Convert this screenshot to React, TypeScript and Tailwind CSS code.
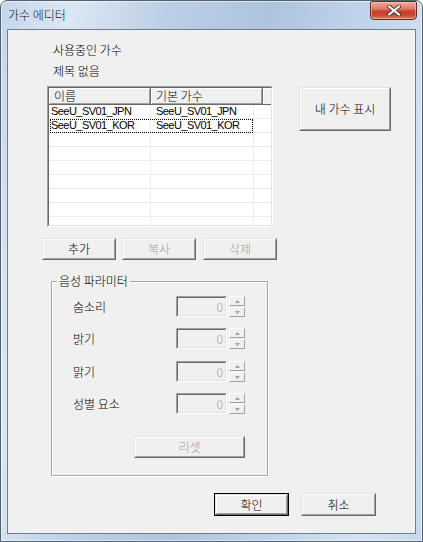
import React from "react";

type BtnProps = {
  children: React.ReactNode;
  disabled?: boolean;
  isDefault?: boolean;
  className?: string;
};

function Btn({ children, disabled = false, isDefault = false, className = "" }: BtnProps) {
  const face = (
    <div className="flex h-full w-full border border-t-[#e3e3e3] border-l-[#e3e3e3] border-b-[#696969] border-r-[#696969]">
      <div className="flex h-full w-full items-center justify-center border border-t-white border-l-white border-b-[#a0a0a0] border-r-[#a0a0a0] bg-[#f0f0f0]">
        <span className={disabled ? "text-[12px] leading-[16px] text-[#a0a0a0]" : "text-[12px] leading-[16px] text-black"}>
          {children}
        </span>
      </div>
    </div>
  );
  if (isDefault) {
    return <div className={"border border-black " + className}>{face}</div>;
  }
  return <div className={className}>{face}</div>;
}

function Arrow({ up }: { up: boolean }) {
  return (
    <svg width="5" height="3" viewBox="0 0 5 3">
      {up ? <path d="M0 3 L2.5 0 L5 3 Z" fill="#a0a0a0" /> : <path d="M0 0 L2.5 3 L5 0 Z" fill="#a0a0a0" />}
    </svg>
  );
}

function SpinRow({ label, className = "" }: { label: string; className?: string }) {
  return (
    <div className={"flex items-center " + className}>
      <div className="w-[103px] text-[12px] leading-[16px]">{label}</div>
      <div className="h-[21px] w-[51px] border border-t-[#a0a0a0] border-l-[#a0a0a0] border-b-white border-r-white">
        <div className="flex h-full w-full items-center justify-end border border-t-[#696969] border-l-[#696969] border-b-[#e3e3e3] border-r-[#e3e3e3] bg-[#f0f0f0] pr-[2px] text-[12px] leading-[16px] text-[#a0a09a]">
          0
        </div>
      </div>
      <div className="ml-[2px] flex h-[21px] w-[16px] flex-col">
        <div className="flex h-[10px] w-full items-center justify-center border border-t-white border-l-white border-b-[#a0a0a0] border-r-[#a0a0a0] bg-[#f0f0f0]">
          <Arrow up />
        </div>
        <div className="mt-[1px] flex h-[10px] w-full items-center justify-center border border-t-white border-l-white border-b-[#a0a0a0] border-r-[#a0a0a0] bg-[#f0f0f0]">
          <Arrow up={false} />
        </div>
      </div>
    </div>
  );
}

const rows: [string, string][] = [
  ["SeeU_SV01_JPN", "SeeU_SV01_JPN"],
  ["SeeU_SV01_KOR", "SeeU_SV01_KOR"],
  ["", ""],
  ["", ""],
  ["", ""],
  ["", ""],
  ["", ""],
  ["", ""],
  ["", ""],
];

function ListView() {
  return (
    <div className="h-[141px] w-[226px] border border-t-[#a0a0a0] border-l-[#a0a0a0] border-b-white border-r-white">
      <div className="h-full w-full overflow-hidden border border-t-[#696969] border-l-[#696969] border-b-[#e3e3e3] border-r-[#e3e3e3] bg-white">
        <div className="flex h-[17px] bg-[#f0f0f0]">
          <div className="w-[102px] border-r border-b border-r-[#696969] border-b-[#696969] pl-[5px] text-[12px] leading-[15px] shadow-[inset_1px_1px_0_#fff,inset_-1px_-1px_0_#a0a0a0]">
            이름
          </div>
          <div className="w-[112px] border-r border-b border-r-[#696969] border-b-[#696969] pl-[5px] text-[12px] leading-[15px] shadow-[inset_1px_1px_0_#fff,inset_-1px_-1px_0_#a0a0a0]">
            기본 가수
          </div>
          <div className="flex-1 border-b border-b-[#696969] shadow-[inset_1px_1px_0_#fff]" />
        </div>
        {rows.map((r, i) => (
          <div
            key={i}
            className="relative flex h-[14px] border-b border-b-[#ededed] font-['Liberation_Sans',Arial,sans-serif] font-normal text-[11px] leading-[13px] tracking-[-0.55px]"
          >
            <div className="w-[102px] border-r border-r-[#ededed] pl-[2px]">{r[0]}</div>
            <div className="w-[103px] border-r border-r-[#ededed] pl-[5px]">{r[1]}</div>
            <div className="flex-1" />
            {i === 1 && (
              <div className="absolute left-[1px] top-0 h-[14px] w-[203px] border border-dotted border-black" />
            )}
          </div>
        ))}
      </div>
    </div>
  );
}

export default function App() {
  return (
    <div className="h-[542px] w-[423px] font-['Noto_Sans_CJK_KR','Noto_Sans',sans-serif] font-light text-black">
      <div className="flex h-full w-full flex-col rounded-t-[7px] border border-[#52606f] bg-[linear-gradient(100deg,#c4d6ec_0%,#dce7f4_14%,#bccfe6_32%,#adc4df_52%,#c2d4ea_72%,#d6e3f1_88%,#c8d9ed_100%)] shadow-[inset_0_0_0_1px_rgba(255,255,255,0.55)]">
        <div className="flex h-[28px] items-start">
          <span className="ml-[7px] mt-[6px] text-[12px] leading-[16px] text-[#1a1a1a]">가수 에디터</span>
          <div className="ml-auto mr-[5px] flex h-[19px] w-[47px] items-center justify-center rounded-b-[4px] rounded-t-[2px] border border-[#6e2a20] bg-[linear-gradient(180deg,#ecab9c_0%,#dc7c66_40%,#c7402a_55%,#c9452f_75%,#e07b62_100%)] shadow-[inset_0_0_0_1px_rgba(255,220,210,0.45)]">
            <svg width="14" height="11" viewBox="0 0 14 11">
              <path d="M2 1.5 L12 9.5 M12 1.5 L2 9.5" stroke="#4a3a38" strokeWidth="4" strokeLinecap="round" />
              <path d="M2 1.5 L12 9.5 M12 1.5 L2 9.5" stroke="#ffffff" strokeWidth="2.2" strokeLinecap="round" />
            </svg>
          </div>
        </div>
        <div className="mx-[6px] flex h-[505px] flex-col border border-[#6f7d8d] bg-[#f0f0f0]">
          <div className="pl-[45px] pt-[12px] text-[12px] leading-[16px]">
            <div>사용중인 가수</div>
            <div className="mt-[5px]">제목 없음</div>
          </div>
          <div className="ml-[39px] mt-[7px] flex items-start">
            <ListView />
            <Btn className="ml-[26px] mt-[1px] h-[44px] w-[92px]">내 가수 표시</Btn>
          </div>
          <div className="ml-[34px] mt-[11px] flex">
            <Btn className="h-[22px] w-[74px]">추가</Btn>
            <Btn disabled className="ml-[6px] h-[22px] w-[74px]">
              복사
            </Btn>
            <Btn disabled className="ml-[7px] h-[22px] w-[74px]">
              삭제
            </Btn>
          </div>
          <div className="relative ml-[43px] mt-[21px] h-[195px] w-[217px] border border-[#a8a8a8] shadow-[inset_1px_1px_0_#fff,1px_1px_0_#fff]">
            <div className="absolute left-[5px] top-[-9px] bg-[#f0f0f0] px-[2px] text-[12px] leading-[16px]">음성 파라미터</div>
            <div className="flex flex-col pl-[21px] pt-[14px]">
              <SpinRow label="숨소리" />
              <SpinRow label="밝기" className="mt-[11px]" />
              <SpinRow label="맑기" className="mt-[12px]" />
              <SpinRow label="성별 요소" className="mt-[11px]" />
              <Btn disabled className="ml-[61px] mt-[22px] h-[22px] w-[111px]">
                리셋
              </Btn>
            </div>
          </div>
          <div className="ml-[206px] mt-[17px] flex">
            <Btn isDefault className="h-[23px] w-[75px]">
              확인
            </Btn>
            <Btn className="ml-[12px] h-[23px] w-[75px]">취소</Btn>
          </div>
        </div>
      </div>
    </div>
  );
}
